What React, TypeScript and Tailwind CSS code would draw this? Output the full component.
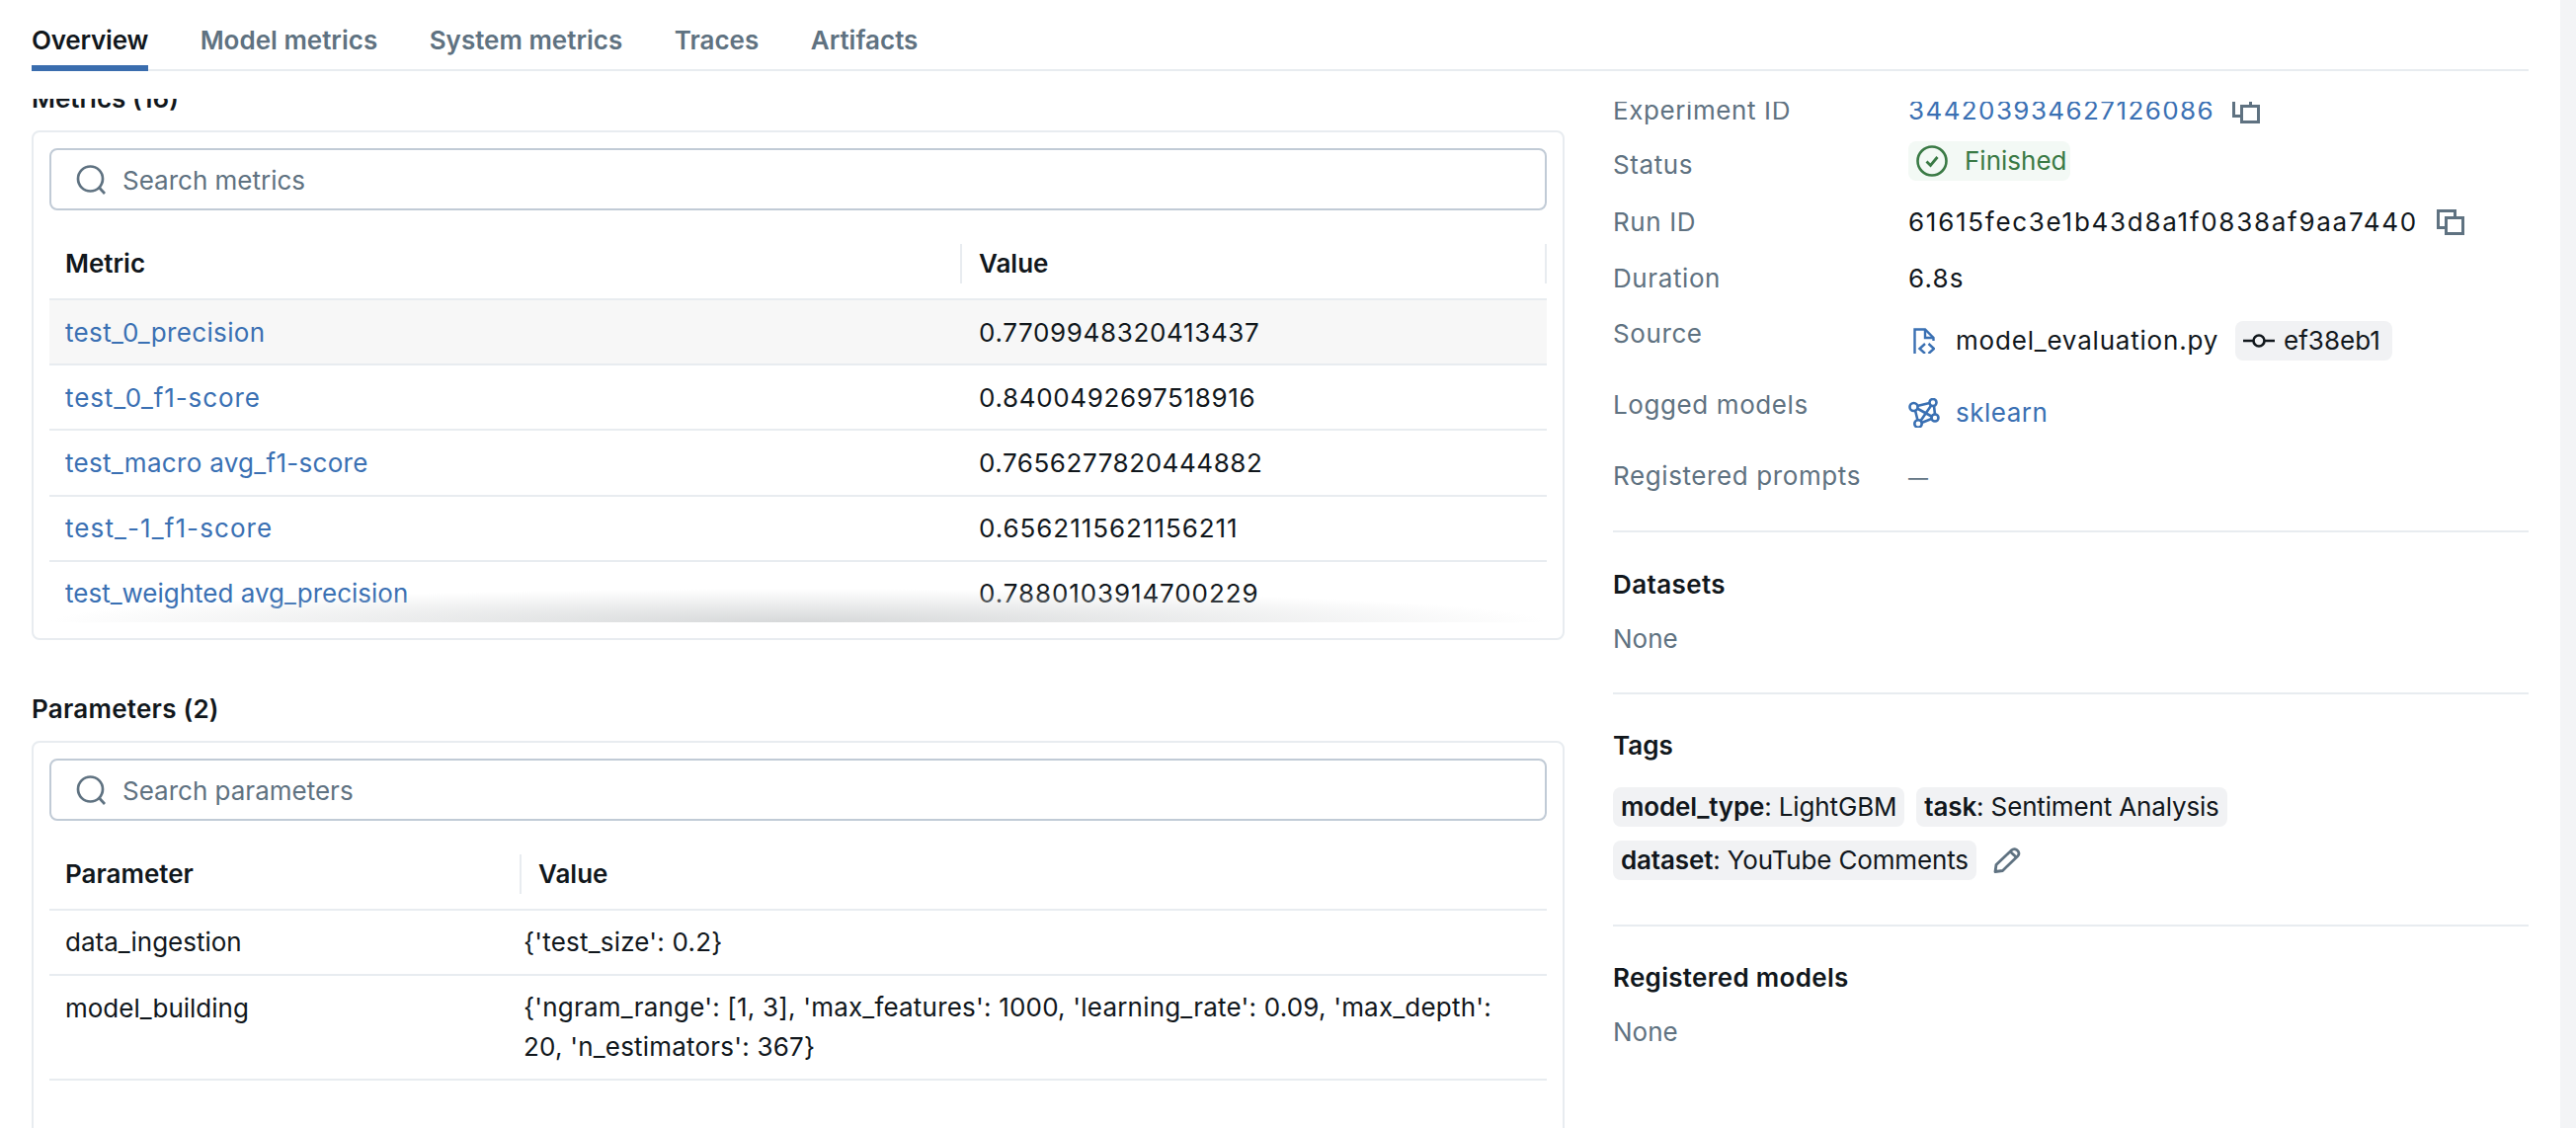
import React from "react";

const font = { fontFamily: "Inter, 'Liberation Sans', sans-serif" };

function SearchIcon() {
  return (
    <svg viewBox="0 0 30 30" className="w-[30px] h-[30px] shrink-0" fill="none" stroke="#5f7281" strokeWidth="2.7">
      <circle cx="14.5" cy="14" r="12.5" />
      <path d="M23.5 23L29 29" />
    </svg>
  );
}

function CopyIcon() {
  return (
    <svg viewBox="0 0 28 26" className="w-[28px] h-[26px] shrink-0" fill="none" stroke="#5f7281" strokeWidth="3">
      <path d="M8.5 18.5H1.5V1.5H18.5V7" />
      <rect x="9.5" y="8.5" width="17" height="16" />
    </svg>
  );
}

function CheckCircle() {
  return (
    <svg viewBox="0 0 32 32" className="w-[32px] h-[32px] shrink-0" fill="none" stroke="#3a7a45" strokeWidth="2.6">
      <circle cx="16" cy="16" r="14.5" />
      <path d="M10.5 16.5L14.5 20.5L21.5 12" strokeWidth="2.8" />
    </svg>
  );
}

function FileCode() {
  return (
    <svg viewBox="0 0 22 26" className="w-[22px] h-[26px] shrink-0" fill="none" stroke="#3a70b3" strokeWidth="2.4">
      <path d="M1.5 26V1.5H12L20.5 10V13" />
      <path d="M12 1.5V10H20.5" />
      <path d="M12 16L6.5 21L12 26M15.5 16L21 21L15.5 26" />
    </svg>
  );
}

function ModelIcon() {
  return (
    <svg viewBox="0 0 32 30" className="w-[32px] h-[30px] shrink-0" fill="none" stroke="#3a70b3" strokeWidth="2.6">
      <path d="M9 8L21.5 5M9 10.5L23.5 18.5M7 12.5L9.5 22.5M23.5 7L12.5 23M26 8L27 16.5M13.5 25L23.5 21" />
      <circle cx="5.5" cy="9" r="4" />
      <circle cx="25" cy="4.5" r="3.5" />
      <circle cx="27" cy="20" r="3.5" />
      <circle cx="10" cy="26" r="3.7" />
    </svg>
  );
}

function CommitIcon() {
  return (
    <svg viewBox="0 0 32 16" className="w-[32px] h-[16px] shrink-0" fill="none" stroke="#11171c" strokeWidth="2.6">
      <circle cx="16" cy="8" r="5.5" />
      <path d="M0 8H10.5M21.5 8H32" />
    </svg>
  );
}

function PencilIcon() {
  return (
    <svg viewBox="0 0 28 26" className="w-[28px] h-[26px] shrink-0" fill="none" stroke="#5f7281" strokeWidth="2.8" strokeLinejoin="round">
      <path d="M2 24.5L3 17.5L18.5 2.8C20 1.4 22 1.2 24 2.6C26.2 4.2 26.5 6.8 25 8.4L9.5 23.5Z" />
      <path d="M17.5 4.5L23.5 10" />
    </svg>
  );
}

function SearchBox({ placeholder }: { placeholder: string }) {
  return (
    <div className="h-[63px] rounded-lg border-2 border-[#c1cbd6] flex items-center gap-[17px] pl-[25px] text-[#5f7281]">
      <SearchIcon />
      <span className="mt-[3px]">{placeholder}</span>
    </div>
  );
}

const metrics: [string, string, string, string][] = [
  ["test_0_precision", "0.7709948320413437", "tracking-[0.35px]", "tracking-[0.65px]"],
  ["test_0_f1-score", "0.8400492697518916", "tracking-[0.9px]", "tracking-[0.65px]"],
  ["test_macro avg_f1-score", "0.7656277820444882", "tracking-[0.3px]", "tracking-[0.55px]"],
  ["test_-1_f1-score", "0.6562115621156211", "tracking-[1.1px]", "tracking-[0.95px]"],
  ["test_weighted avg_precision", "0.7880103914700229", "tracking-normal", "tracking-[0.9px]"],
];

function Tag({ k, v }: { k: string; v: string }) {
  return (
    <span className="h-[40px] rounded-lg bg-[#f1f2f4] px-2 flex items-center whitespace-pre tracking-[-0.15px]">
      <span className="font-semibold">{k}</span>
      <span>: {v}</span>
    </span>
  );
}

function Row({ label, h, children }: { label: string; h: string; children: React.ReactNode }) {
  return (
    <div className={`grid grid-cols-[299px_1fr] ${h}`}>
      <div className="h-[40px] flex items-center text-[#5f7281] tracking-[0.6px]">{label}</div>
      <div className="min-w-0">{children}</div>
    </div>
  );
}

export default function App() {
  return (
    <div style={font} className="w-[2608px] h-[1142px] overflow-hidden bg-white flex text-[26px] leading-[40px] text-[#11171c]">
      <div className="w-[2592px] pl-[32px] pr-[32px] flex flex-col">
        <div className="h-[72px] border-b-2 border-[#e8ecf0] flex gap-[52.5px] font-semibold text-[#5f7281] shrink-0">
          <div className="h-[72px] pt-[21px] border-b-[6px] border-[#3a6dae] text-[#11171c] tracking-[-0.2px]">Overview</div>
          <div className="pt-[21px]">Model metrics</div>
          <div className="pt-[21px]">System metrics</div>
          <div className="pt-[21px]">Traces</div>
          <div className="pt-[21px]">Artifacts</div>
        </div>

        <div className="mt-[28px] flex gap-[49px] flex-1 min-h-0 overflow-hidden">
          <div className="w-[1552px] shrink-0 -mt-[20px]">
            <div className="font-semibold h-[40px] mb-[12px]">Metrics (16)</div>
            <div className="rounded-lg border-2 border-[#e8ecf0] px-[16px] pt-[16px] pb-[16px]">
              <SearchBox placeholder="Search metrics" />
              <div className="relative h-[417px] overflow-hidden">
                <div className="mt-[20px] h-[71px] border-b-2 border-[#e8ecf0] flex items-center font-semibold pb-[2px]">
                  <div className="w-[924px] pl-[16px] h-[40px] border-r-2 border-[#e8ecf0] flex items-center">Metric</div>
                  <div className="flex-1 pl-[17px] h-[40px] border-r-2 border-[#e8ecf0] flex items-center">Value</div>
                </div>
                {metrics.map(([name, value, track, valueTrack], i) => (
                  <div key={name} className={`h-[66.2px] border-b-2 border-[#e8ecf0] flex items-center ${i === 0 ? "bg-[#f7f7f7]" : ""}`}>
                    <div className={`w-[925px] pl-[16px] pt-[1px] text-[#3a70b3] ${track}`}>{name}</div>
                    <div className={`pl-[16px] pt-[1px] ${valueTrack}`}>{value}</div>
                  </div>
                ))}
                <div className="absolute left-0 right-0 bottom-0 h-[34px] bg-[radial-gradient(ellipse_50%_100%_at_50%_100%,#d6d8d9_0%,#d6d8d900_100%)]" />
              </div>
            </div>

            <div className="font-semibold h-[40px] mt-[50px] mb-[12px] tracking-[0.25px]">Parameters (2)</div>
            <div className="rounded-lg border-2 border-[#e8ecf0] px-[16px] pt-[16px] h-[500px]">
              <SearchBox placeholder="Search parameters" />
              <div className="mt-[20px] h-[71px] border-b-2 border-[#e8ecf0] flex items-center font-semibold pb-[2px]">
                <div className="w-[478px] pl-[16px] h-[40px] border-r-2 border-[#e8ecf0] flex items-center shrink-0">Parameter</div>
                <div className="pl-[17px]">Value</div>
              </div>
              <div className="h-[66px] border-b-2 border-[#e8ecf0] flex items-center">
                <div className="w-[480px] pl-[16px] shrink-0">data_ingestion</div>
                <div className="tracking-[0.2px]">{"{'test_size': 0.2}"}</div>
              </div>
              <div className="h-[106px] border-b-2 border-[#e8ecf0] flex items-center">
                <div className="w-[480px] pl-[16px] shrink-0 self-start pt-[13px]">model_building</div>
                <div className="w-[990px] tracking-[0.2px]">
                  {"{'ngram_range': [1, 3], 'max_features': 1000, 'learning_rate': 0.09, 'max_depth': 20, 'n_estimators': 367}"}
                </div>
              </div>
            </div>
          </div>

          <div className="flex-1 min-w-0 mt-[3px] overflow-hidden">
            <div className="-mt-[11px]">
              <Row label="Experiment ID" h="h-[55px]">
                <div className="flex items-center gap-[18px]">
                  <span className="text-[#3a70b3] tracking-[1.4px]">344203934627126086</span>
                  <CopyIcon />
                </div>
              </Row>
              <Row label="Status" h="h-[58px]">
                <div className="-mt-[4px] h-[40px] w-[164px] rounded-lg bg-[#f3f9f5] pl-[8px] flex items-center gap-[17px] text-[#3a7a45]">
                  <CheckCircle />
                  <span>Finished</span>
                </div>
              </Row>
              <Row label="Run ID" h="h-[57px]">
                <div className="flex items-center gap-[19px]">
                  <span className="tracking-[1.72px]">61615fec3e1b43d8a1f0838af9aa7440</span>
                  <CopyIcon />
                </div>
              </Row>
              <Row label="Duration" h="h-[56px]">
                <div className="tracking-[1.2px]">6.8s</div>
              </Row>
              <Row label="Source" h="h-[72px]">
                <div className="mt-[7px] flex items-center">
                  <span className="ml-[5px]"><FileCode /></span>
                  <span className="ml-[21px] tracking-[0.8px]">model_evaluation.py</span>
                  <span className="ml-[17px] h-[40px] w-[159px] rounded-lg bg-[#f1f2f4] pl-[8px] flex items-center gap-[9px]">
                    <CommitIcon />
                    ef38eb1
                  </span>
                </div>
              </Row>
              <Row label="Logged models" h="h-[72px]">
                <div className="mt-[8px] flex items-center text-[#3a70b3]">
                  <ModelIcon />
                  <span className="ml-[16px] tracking-[0.5px]">sklearn</span>
                </div>
              </Row>
              <Row label="Registered prompts" h="h-[40px]">
                <span className="text-[#5f7281] text-[20px]">—</span>
              </Row>
            </div>
            <div className="mt-[35px] border-t-2 border-[#e8ecf0] pt-[33px]">
              <div className="font-semibold tracking-[0.4px]">Datasets</div>
              <div className="mt-[15px] text-[#5f7281]">None</div>
            </div>
            <div className="mt-[34px] border-t-2 border-[#e8ecf0] pt-[32px]">
              <div className="font-semibold">Tags</div>
              <div className="mt-[22px] flex flex-col gap-[14px]">
                <div className="flex gap-[12px]">
                  <Tag k="model_type" v="LightGBM" />
                  <Tag k="task" v="Sentiment Analysis" />
                </div>
                <div className="flex items-center gap-[17px]">
                  <Tag k="dataset" v="YouTube Comments" />
                  <PencilIcon />
                </div>
              </div>
            </div>
            <div className="mt-[45px] border-t-2 border-[#e8ecf0] pt-[32px]">
              <div className="font-semibold tracking-[0.3px]">Registered models</div>
              <div className="mt-[15px] text-[#5f7281]">None</div>
            </div>
          </div>
        </div>
      </div>
      <div className="w-[16px] bg-[#f3f4f6]" />
    </div>
  );
}
